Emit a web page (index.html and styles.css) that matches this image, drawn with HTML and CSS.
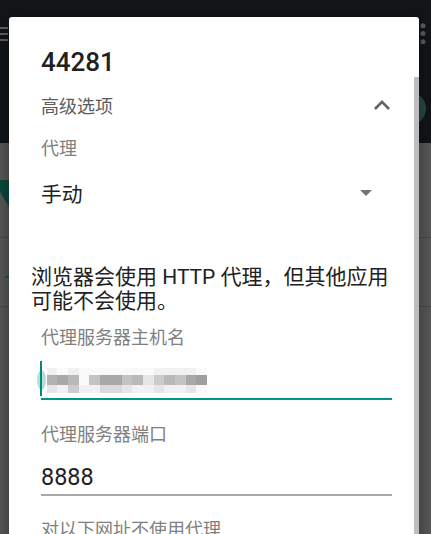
FILE: index.html
```html
<!DOCTYPE html>
<html lang="zh-CN">
<head>
<meta charset="utf-8">
<title>44281</title>
<link rel="stylesheet" href="styles.css">
</head>
<body>
<div class="app">
  <header class="appbar">
    <div class="appbar-top">
      <svg class="menu" viewBox="0 0 18 16" width="18" height="16" aria-hidden="true">
        <rect x="0" y="1" width="18" height="2"/>
        <rect x="0" y="7" width="18" height="2"/>
        <rect x="0" y="13" width="18" height="2"/>
      </svg>
      <svg class="more" viewBox="0 0 6 22" width="6" height="22" aria-hidden="true">
        <circle cx="3" cy="2.8" r="2.5"/>
        <circle cx="3" cy="10.5" r="2.5"/>
        <circle cx="3" cy="18.8" r="2.5"/>
      </svg>
    </div>
    <div class="fab-row"><span class="fab"></span></div>
  </header>
  <main class="list">
    <div class="row row-wifi">
      <svg class="wifi-peek" viewBox="0 0 9 27" width="9" height="27" aria-hidden="true">
        <polygon points="0,0 9,0 9,27 0,12"/>
      </svg>
    </div>
    <div class="row row-second"><span class="dash"></span></div>
    <div class="row row-third"></div>
  </main>
</div>

<div class="dialog">
  <div class="dialog-body">
    <h1 class="title">44281</h1>
    <div class="adv">
      <span>高级选项</span>
      <svg class="chev" viewBox="6 8 12 7.41" width="16" height="10" aria-hidden="true">
        <path d="M12 8l-6 6 1.41 1.41L12 10.83l4.59 4.58L18 14z"/>
      </svg>
    </div>
    <div class="label l-proxy">代理</div>
    <div class="spinner">
      <span>手动</span>
      <svg class="drop" viewBox="7 10 10 5" width="12" height="6" aria-hidden="true">
        <path d="M7 10l5 5 5-5z"/>
      </svg>
    </div>
    <p class="desc">浏览器会使用 HTTP 代理，但其他应用可能不会使用。</p>
    <div class="label l-host">代理服务器主机名</div>
    <div class="field field-host">
      <span class="handle"></span>
      <span class="cursor"></span>
      <div class="blur" aria-label="已模糊的主机名">
        <i class="p1"></i><i class="p0"></i><i class="p1"></i><i class="p0"></i><i class="p0"></i><i class="p0"></i><i class="p0"></i><i class="p0"></i><i class="p0"></i><i class="p0"></i><i class="p1"></i><i class="p1"></i><i class="p1"></i><i class="p1"></i><i class="p0"></i>
        <i class="p7"></i><i class="p8"></i><i class="p6"></i><i class="p0"></i><i class="p5"></i><i class="p8"></i><i class="p8"></i><i class="p5"></i><i class="p6"></i><i class="p2"></i><i class="p4"></i><i class="p6"></i><i class="p5"></i><i class="p8"></i><i class="p9"></i>
        <i class="p2"></i><i class="p1"></i><i class="p4"></i><i class="p1"></i><i class="p1"></i><i class="p3"></i><i class="p3"></i><i class="p2"></i><i class="p1"></i><i class="p1"></i><i class="p2"></i><i class="p1"></i><i class="p1"></i><i class="p2"></i><i class="p0"></i>
      </div>
    </div>
    <div class="label l-port">代理服务器端口</div>
    <div class="field field-port">8888</div>
    <div class="label l-bypass">对以下网址不使用代理</div>
  </div>
  <div class="scrollbar"></div>
</div>
</body>
</html>
```

FILE: styles.css
```css
html, body {
  margin: 0;
  padding: 0;
  height: 100%;
  overflow: hidden;
}

body {
  position: relative;
  background: #5a5a5a;
  font-family: Roboto, "Noto Sans CJK SC", sans-serif;
}

/* ---------- dimmed app behind the dialog ---------- */
.app {
  display: flex;
  flex-direction: column;
  height: 100%;
}

.appbar {
  height: 143px;
  flex: none;
  background: #121619;
  display: flex;
  flex-direction: column;
}

.appbar-top {
  display: flex;
  justify-content: space-between;
  align-items: flex-start;
  padding-top: 23px;
}

.menu {
  margin-left: -10px;
  margin-top: 3px;
  fill: #606264;
}

.more {
  margin-right: 5px;
  fill: #5c5e60;
}

.fab-row {
  display: flex;
  justify-content: flex-end;
  margin-top: 46.5px;
  padding-right: 5px;
}

.fab {
  width: 33px;
  height: 33px;
  border-radius: 50%;
  background: #2c4a45;
}

.list {
  flex: 1;
  display: flex;
  flex-direction: column;
}

.row {
  border-bottom: 1px solid #4c4c4c;
}

.row-wifi {
  height: 94px;
}

.wifi-peek {
  display: block;
  margin-top: 37px;
  fill: #0a4b40;
}

.row-second {
  height: 68px;
}

.dash {
  display: block;
  width: 4px;
  height: 2px;
  margin: 38px 0 0 5px;
  background: #0f5a50;
}

.row-third {
  flex: 1;
  border-bottom: none;
}

/* ---------- dialog ---------- */
.dialog {
  position: absolute;
  left: 9px;
  top: 17px;
  width: 410px;
  height: 560px;
  background: #ffffff;
  border-radius: 3px;
  box-shadow: 0 6px 20px rgba(0, 0, 0, 0.45);
  overflow: hidden;
}

.dialog-body {
  padding: 0 27px 0 32px;
}

.scrollbar {
  position: absolute;
  right: 0;
  top: 60px;
  bottom: 0;
  width: 5px;
  background: #bdbdbd;
}

.title {
  margin: 29px 0 0;
  font-size: 26px;
  font-weight: 500;
  line-height: 32px;
  color: #212121;
}

.adv {
  margin-top: 7px;
  height: 40px;
  display: flex;
  align-items: center;
  justify-content: space-between;
  font-size: 18px;
  color: #5c5c5c;
}

.chev {
  margin-right: 2px;
  fill: #646464;
}

.label {
  font-size: 18px;
  line-height: 24px;
  color: #808080;
}

.l-proxy { margin-top: 11.5px; }

.spinner {
  margin-top: 18.5px;
  height: 28px;
  display: flex;
  align-items: center;
  justify-content: space-between;
  font-size: 20.8px;
  color: #212121;
}

.drop {
  margin-right: 20px;
  fill: #757575;
}

.desc {
  margin: 58px 0 0 -10px;
  font-size: 21px;
  line-height: 24px;
  color: #212121;
}

.l-host { margin-top: 13px; }

.field {
  position: relative;
  margin-top: 16px;
}

.field-host {
  padding: 2px 0 5px;
  border-bottom: 2px solid #009688;
}

.blur {
  display: grid;
  grid-template-columns: repeat(15, 10.7px);
  grid-template-rows: 7px 10px 8px;
  margin-left: 5.7px;
  width: max-content;
}

.blur i { display: block; }
.p0 { background: #fafafa; }
.p1 { background: #f1f1f1; }
.p2 { background: #e6e6e6; }
.p3 { background: #dadada; }
.p4 { background: #cccccc; }
.p5 { background: #c3c3c3; }
.p6 { background: #b9b9b9; }
.p7 { background: #b1b1b1; }
.p8 { background: #a8a8a8; }
.p9 { background: #9f9f9f; }

.handle {
  position: absolute;
  left: -4px;
  top: 4px;
  width: 9px;
  height: 20px;
  border-radius: 50%;
  background: #b8ddd8;
}

.cursor {
  position: absolute;
  left: -1px;
  top: -5px;
  width: 2px;
  height: 35px;
  background: #00897b;
}

.l-port { margin-top: 22.5px; }

.field-port {
  font-size: 23.4px;
  line-height: 28px;
  padding-bottom: 3.5px;
  border-bottom: 2px solid #a9a9a9;
  color: #212121;
}

.l-bypass { margin-top: 22px; }
```
